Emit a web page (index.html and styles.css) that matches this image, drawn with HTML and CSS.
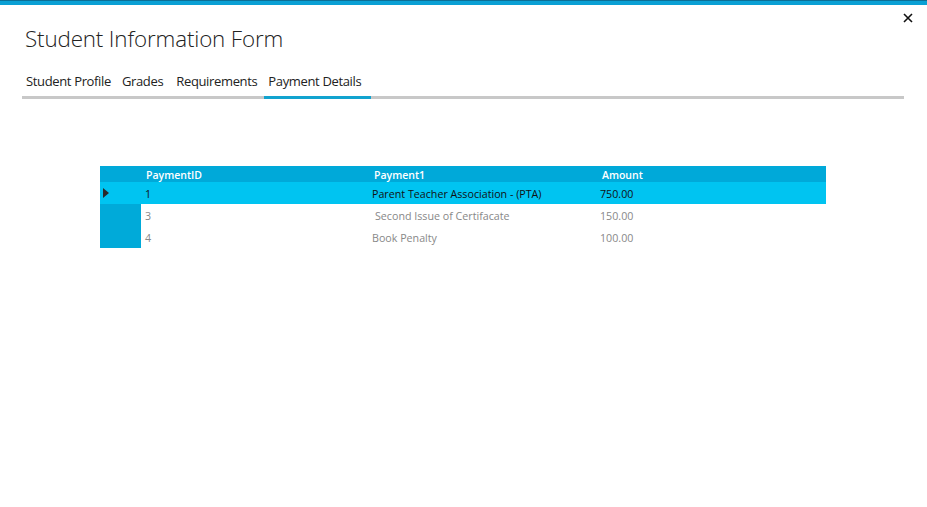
FILE: index.html
```html
<!DOCTYPE html>
<html>
<head>
<meta charset="utf-8">
<link rel="stylesheet" href="styles.css">
</head>
<body>
<div class="topbar"></div>
<button class="close" aria-label="Close">
  <svg width="10" height="10" viewBox="0 0 10 10"><path d="M1 1L9 9M9 1L1 9" stroke="#111" stroke-width="1.6"/></svg>
</button>
<div class="content">
  <h1 class="title">Student Information Form</h1>
  <div class="tabs">
    <div class="tab t1">Student Profile</div>
    <div class="tab t2">Grades</div>
    <div class="tab t3">Requirements</div>
    <div class="tab active">Payment Details</div>
  </div>
  <div class="grid">
    <div class="row head">
      <div class="rh"></div>
      <div class="c c1">PaymentID</div>
      <div class="c c2">Payment1</div>
      <div class="c c3">Amount</div>
    </div>
    <div class="row sel">
      <div class="rh"><span class="arrow"></span></div>
      <div class="c c1">1</div>
      <div class="c c2">Parent Teacher Association - (PTA)</div>
      <div class="c c3">750.00</div>
    </div>
    <div class="row">
      <div class="rh"></div>
      <div class="c c1">3</div>
      <div class="c c2 ind">Second Issue of Certifacate</div>
      <div class="c c3">150.00</div>
    </div>
    <div class="row">
      <div class="rh"></div>
      <div class="c c1">4</div>
      <div class="c c2">Book Penalty</div>
      <div class="c c3">100.00</div>
    </div>
  </div>
</div>
</body>
</html>
```
FILE: styles.css
```css
html, body { margin: 0; padding: 0; background: #fff; }
body { font-family: "Open Sans", "Noto Sans", sans-serif; width: 927px; height: 507px; position: relative; overflow: hidden; }
.topbar { height: 5px; background: #0aa0d4; border-top: 1px solid #0b6f96; box-sizing: border-box; }
.close { position: absolute; top: 11px; right: 12px; width: 14px; height: 14px; padding: 0; border: 0; background: transparent; display: flex; align-items: center; justify-content: center; }
.content { padding: 0 23px 0 22px; }
.title { margin: 19px 0 0 3px; font-weight: 300; font-size: 22.4px; letter-spacing: -0.15px; line-height: 30px; color: #222; }
.tabs { display: flex; margin-top: 17px; border-bottom: 3px solid #c8c8c8; height: 25px; }
.tab { font-size: 13px; color: #222; padding: 1px 8px 0 4px; line-height: 18px; letter-spacing: -0.35px; position: relative; }
.tab.t1 { padding-right: 7px; }
.tab.t2 { padding-right: 9px; }
.tab.t3 { padding-right: 7px; }
.tab.active { padding-right: 10px; }
.tab.active::after { content: ""; position: absolute; left: 0; right: 0; bottom: -3px; height: 3px; background: #12a3cf; }
.grid { margin: 67px 0 0 78px; width: 726px; font-size: 10.7px; }
.row { display: flex; height: 22px; align-items: center; color: #888; padding-top: 1px; box-sizing: border-box; }
.row.head { height: 16px; background: #00a9d9; color: #fff; font-weight: 600; font-size: 10.5px; }
.row.sel { background: #00c4f1; color: #111; }
.rh { width: 41px; height: 100%; background: #00aad9; display: flex; align-items: center; flex: none; }
.row .rh { margin-top: -1px; height: calc(100% + 1px); }
.row.head .rh, .row.sel .rh { background: transparent; }
.arrow { margin-left: 3px; width: 0; height: 0; border-top: 5px solid transparent; border-bottom: 5px solid transparent; border-left: 6px solid #2a2a2a; }
.c1 { width: 227px; padding-left: 4px; box-sizing: border-box; }
.c2 { width: 229px; padding-left: 4px; box-sizing: border-box; }
.c3 { padding-left: 3px; }
.row.head .c1 { padding-left: 5px; }
.row.head .c2 { padding-left: 6px; }
.row.head .c3 { padding-left: 5px; }
.c2.ind { padding-left: 7px; }
```
